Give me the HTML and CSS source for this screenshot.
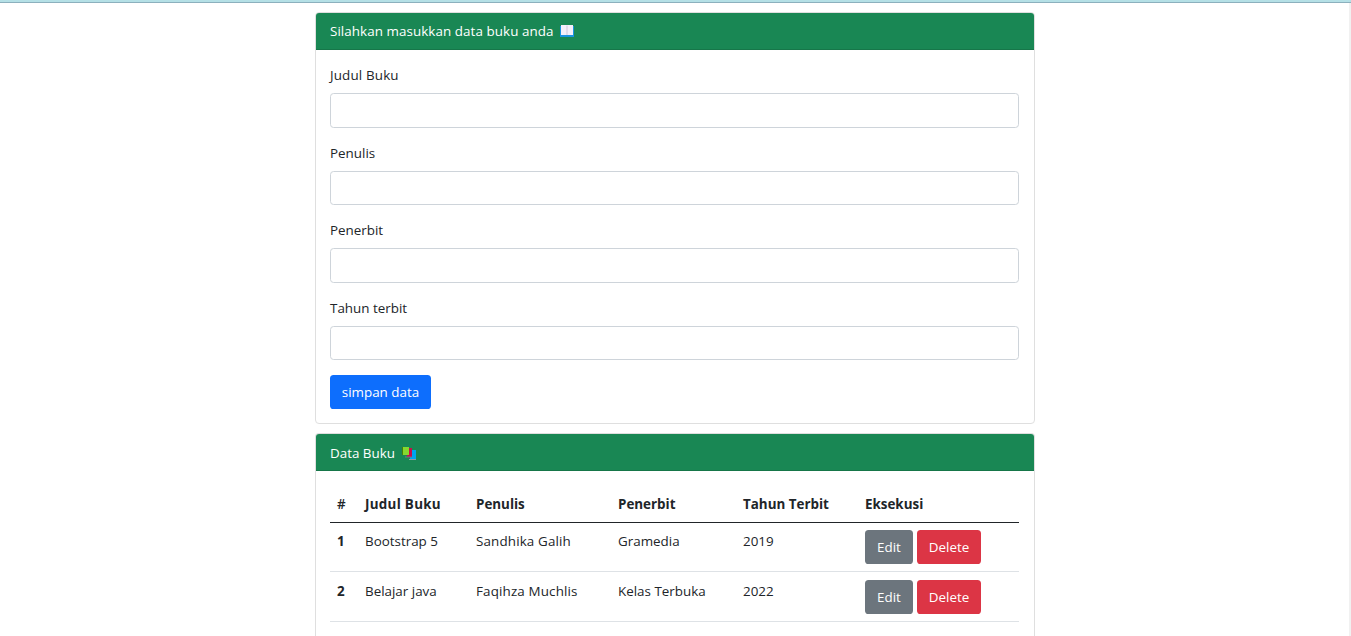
FILE: index.html
```html
<!DOCTYPE html>
<html lang="id">
<head>
<meta charset="utf-8">
<title>Data Buku</title>
<link rel="stylesheet" href="styles.css">
</head>
<body>
<div class="topbar"></div>
<main class="page">
<div class="container">
  <section class="card">
    <header class="card-header"><span class="title-form">Silahkan masukkan data buku anda</span>
      <svg class="emoji" width="14" height="12" viewBox="0 0 14 12"><path fill="#1a93e0" d="M0 1h14v11H0z"/><path fill="#f4effa" d="M1 0h12v10H1z"/><path fill="#cfc6dc" d="M6.5 0.5h1v9.5h-1z"/></svg>
    </header>
    <form class="card-body">
      <div class="field"><label class="label-judul" for="judul">Judul Buku</label><input id="judul" type="text"></div>
      <div class="field"><label for="penulis">Penulis</label><input id="penulis" type="text"></div>
      <div class="field"><label for="penerbit">Penerbit</label><input id="penerbit" type="text"></div>
      <div class="field"><label for="tahun">Tahun terbit</label><input id="tahun" type="text"></div>
      <button class="btn btn-primary" type="button">simpan data</button>
    </form>
  </section>
  <section class="card card-data">
    <header class="card-header card-header-data"><span class="title-data">Data Buku</span>
      <svg class="emoji" width="14" height="14" viewBox="0 0 14 14"><path fill="#00a4ef" d="M8 4h6v9H8z"/><path fill="#8a9ba5" d="M7 13h7v1H7z"/><path fill="#c50f4a" d="M5 2h5v9H5z"/><path fill="#7d7180" d="M3 10.5h7v1H3z"/><path fill="#498205" d="M0 1h1v8H0z"/><path fill="#86d82f" d="M1 1h6v8H1z"/></svg>
    </header>
    <div class="card-body">
      <table>
        <colgroup><col class="c-num"><col class="c-title"><col class="c-author"><col class="c-publisher"><col class="c-year"><col></colgroup>
        <thead>
          <tr><th class="hash">#</th><th class="th-judul">Judul Buku</th><th>Penulis</th><th>Penerbit</th><th>Tahun Terbit</th><th>Eksekusi</th></tr>
        </thead>
        <tbody>
          <tr><th>1</th><td>Bootstrap 5</td><td class="author">Sandhika Galih</td><td>Gramedia</td><td>2019</td><td><div class="actions"><button class="btn btn-secondary" type="button">Edit</button><button class="btn btn-danger" type="button">Delete</button></div></td></tr>
          <tr><th>2</th><td>Belajar java</td><td class="author">Faqihza Muchlis</td><td>Kelas Terbuka</td><td>2022</td><td><div class="actions"><button class="btn btn-secondary" type="button">Edit</button><button class="btn btn-danger" type="button">Delete</button></div></td></tr>
        </tbody>
      </table>
    </div>
  </section>
</div>
</main>
</body>
</html>
```
FILE: styles.css
```css
* { box-sizing: border-box; }
body {
  margin: 0;
  height: 636px;
  overflow: hidden;
  background: #fff;
  color: #212529;
  font: 13.4px/22px "Open Sans", "Noto Sans", sans-serif;
}
.topbar {
  height: 3px;
  background: #b5e0e6;
  border-bottom: 1px solid #8cb0bd;
}
.page {
  height: 633px;
  overflow: hidden;
  padding: 9px 0 0 315px;
  border-right: 2px solid #f1f1f1;
}
.container { width: 720px; }
.card { height: 412px; border: 1px solid #dfdfdf; border-radius: 4px; }
.card-data { height: 203px; margin-top: 9px; border-bottom: 0; border-radius: 4px 4px 0 0; }
.card-header {
  display: flex;
  align-items: center;
  height: 37px;
  padding: 0 14px;
  background: #198754;
  border-bottom: 1px solid #167649;
  border-radius: 3px 3px 0 0;
  color: #fff;
}
.card-header-data { padding-top: 2px; }
.title-form { width: 223px; letter-spacing: 0.07px; white-space: nowrap; }
.title-data { width: 65px; white-space: nowrap; }
.emoji { margin-left: 7px; }
.card-body { padding: 14px 15px 0 14px; }
.field { height: 77.6px; }
.field label { display: block; height: 29px; }
.field .label-judul, .author { letter-spacing: 0.15px; }
.th-judul { letter-spacing: 0.3px; }
.field input {
  display: block;
  width: 100%;
  height: 34.6px;
  border: 1px solid #ced4da;
  border-radius: 3.6px;
  background: #fff;
}
.btn {
  height: 34px;
  border: 0;
  border-radius: 3.6px;
  padding: 0;
  color: #fff;
  font: inherit;
}
.btn-primary { display: block; width: 101px; margin-top: 0.6px; background: #0d6efd; }
.btn-secondary { width: 48px; background: #6c757d; }
.btn-danger { width: 64px; background: #dc3545; }
.actions { display: flex; gap: 4px; }
table { width: 100%; border-collapse: separate; border-spacing: 0; table-layout: fixed; }
.c-num { width: 28px; }
.c-title { width: 111px; }
.c-author { width: 142px; }
.c-publisher { width: 125px; }
.c-year { width: 122px; }
th, td { padding: 8px 7px 0; text-align: left; vertical-align: top; white-space: nowrap; }
thead th { height: 38px; border-bottom: 1px solid #212529; }
thead .hash { font-weight: 600; }
tbody th, tbody td { height: 49px; padding-top: 7px; border-bottom: 1px solid #dee2e6; }
tbody tr + tr > * { height: 50px; padding-top: 8px; }
```
